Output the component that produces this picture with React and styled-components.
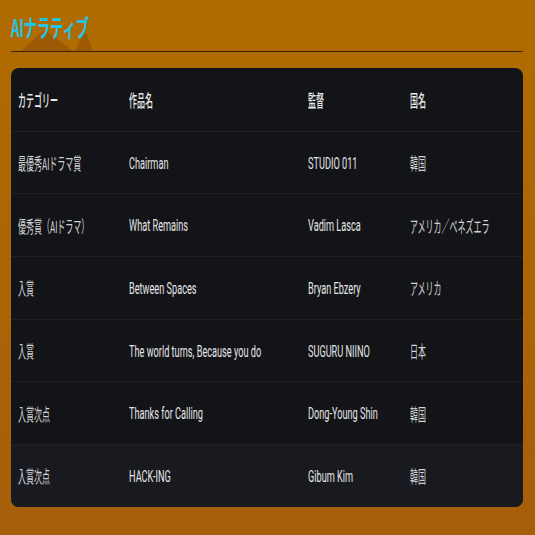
import styled, { createGlobalStyle } from "styled-components";

const rows = [
  ["最優秀AIドラマ賞", "Chairman", "STUDIO 011", "韓国"],
  ["優秀賞（AIドラマ）", "What Remains", "Vadim Lasca", "アメリカ／ベネズエラ"],
  ["入賞", "Between Spaces", "Bryan Ebzery", "アメリカ"],
  ["入賞", "The world turns, Because you do", "SUGURU NIINO", "日本"],
  ["入賞次点", "Thanks for Calling", "Dong-Young Shin", "韓国"],
  ["入賞次点", "HACK-ING", "Gibum Kim", "韓国"],
];

export default function App() {
  return (
    <>
      <GlobalStyle />
      <StyledPage>
        <StyledHeader>
          <StyledPeaks viewBox="0 0 100 30" preserveAspectRatio="none">
            <path d="M10 30 L30 4 Q34 0 38 4 L62 30 Z" />
            <path d="M64 30 L72 6 Q74 2 76 6 L82 30 Z" />
          </StyledPeaks>
          <StyledTitle>AIナラティブ</StyledTitle>
        </StyledHeader>
        <StyledTable>
          <StyledRow $head>
            {["カテゴリー", "作品名", "監督", "国名"].map((h) => (
              <StyledCell key={h} $head>
                <StyledText $cjk>{h}</StyledText>
              </StyledCell>
            ))}
          </StyledRow>
          {rows.map((r, i) => (
            <StyledRow key={i} $hover={i === rows.length - 1}>
              {r.map((c, j) => (
                <StyledCell key={j} $dim={j === 0 || j === 3}>
                  <StyledText $cjk={j === 0 || j === 3}>{c}</StyledText>
                </StyledCell>
              ))}
            </StyledRow>
          ))}
        </StyledTable>
      </StyledPage>
    </>
  );
}

const GlobalStyle = createGlobalStyle`
  html, body {
    margin: 0;
    padding: 0;
  }
  body {
    font-family: Roboto, "Noto Sans CJK JP", sans-serif;
  }
`;

const StyledPage = styled.div`
  width: 535px;
  height: 535px;
  box-sizing: border-box;
  padding: 0 12px 0 11px;
  background: linear-gradient(#b06c00, #a75e0a);
  display: flex;
  flex-direction: column;
  gap: 16px;
`;

const StyledHeader = styled.div`
  position: relative;
  height: 51px;
  border-bottom: 1px solid #3b2402;
  display: flex;
  align-items: center;
`;

const StyledPeaks = styled.svg`
  position: absolute;
  left: 0;
  bottom: 0;
  width: 100px;
  height: 21px;
  fill: #9f5a06;
`;

const StyledTitle = styled.h1`
  position: relative;
  margin: 2px 0 0;
  font-family: "Noto Sans CJK JP", sans-serif;
  font-size: 24px;
  font-weight: 700;
  color: #1fc6ea;
  white-space: nowrap;
  transform: scaleX(0.55);
  transform-origin: left center;
`;

const StyledTable = styled.div`
  background: #131418;
  border-radius: 8px;
  overflow: hidden;
`;

const StyledRow = styled.div`
  display: grid;
  grid-template-columns: 111px 179px 102px 1fr;
  height: 62.7px;
  background: ${(p) => (p.$hover ? "#181a20" : "transparent")};
  border-top: ${(p) => (p.$head ? "none" : "1px solid #1e2025")};
  box-sizing: border-box;
`;

const StyledCell = styled.div`
  display: flex;
  align-items: center;
  padding-left: 7px;
  font-size: 17px;
  font-weight: ${(p) => (p.$head ? 500 : 400)};
  color: ${(p) => (p.$head ? "#ececec" : p.$dim ? "#d2d2d2" : "#e6e6e6")};
  white-space: nowrap;
`;

const StyledText = styled.span`
  display: inline-block;
  transform: scaleX(${(p) => (p.$cjk ? 0.47 : 0.54)});
  transform-origin: left center;
`;
